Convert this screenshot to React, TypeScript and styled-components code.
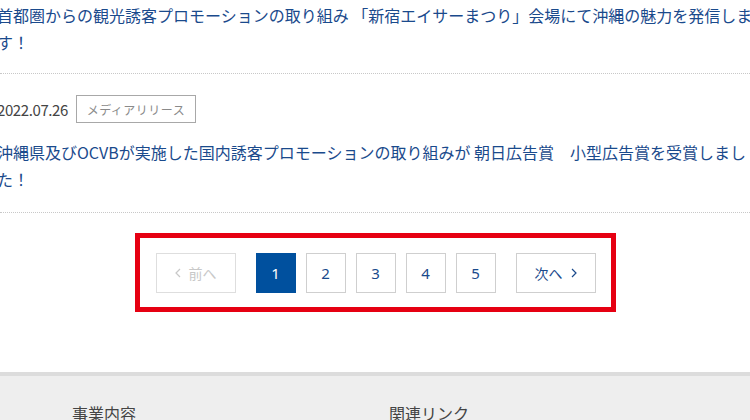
import React from "react";
import styled, { createGlobalStyle } from "styled-components";

const Global = createGlobalStyle`
  html, body { margin: 0; padding: 0; background: #fff; }
  body {
    width: 750px;
    height: 420px;
    overflow: hidden;
    font-family: "Noto Sans", "Noto Sans CJK JP", sans-serif;
    color: #333;
  }
`;

const Page = styled.div`
  display: flex;
  flex-direction: column;
  width: 750px;
`;

const NewsList = styled.ul`
  list-style: none;
  margin: 0;
  padding: 0;
`;

const NewsItem = styled.li<{ $first?: boolean }>`
  display: flex;
  flex-direction: column;
  padding: ${(p) => (p.$first ? "2px 0 17px" : "21px 0 19px")};
  border-bottom: 1px dotted #c8c8c8;
`;

const Inner = styled.div`
  margin-left: -3px;
  width: 768px;
  display: flex;
  flex-direction: column;
  gap: 16px;
`;

const Meta = styled.div`
  display: flex;
  align-items: center;
  gap: 8px;
  height: 28px;
`;

const DateText = styled.span`
  font-family: "Noto Sans CJK JP", sans-serif;
  font-size: 15px;
  color: #444;
  letter-spacing: -0.4px;
`;

const Tag = styled.span`
  box-sizing: border-box;
  display: inline-flex;
  align-items: center;
  justify-content: center;
  width: 120px;
  height: 28px;
  border: 1px solid #a8a8a8;
  font-family: "Noto Sans CJK JP", sans-serif;
  font-size: 12px;
  color: #8a8a8a;
  letter-spacing: 0.5px;
`;

const Title = styled.a`
  display: block;
  font-family: "Noto Sans CJK JP", sans-serif;
  font-size: 16px;
  line-height: 27px;
  color: #1a4a8c;
  text-decoration: none;
`;

const PagerWrap = styled.div`
  display: flex;
  justify-content: center;
  padding: 20px 0 60px;
  border-bottom: 4px solid #dcdcdc;
`;

const Pager = styled.nav`
  display: flex;
  align-items: center;
  padding: 15px 15px 14px 16px;
  border: 5px solid #e60012;
`;

const Pages = styled.div`
  display: flex;
  gap: 10px;
  margin: 0 20px;
`;

const PageBtn = styled.a<{ $active?: boolean }>`
  box-sizing: border-box;
  display: flex;
  align-items: center;
  justify-content: center;
  width: 40px;
  height: 40px;
  border: 1px solid ${(p) => (p.$active ? "#00509e" : "#cfcfcf")};
  background: ${(p) => (p.$active ? "#00509e" : "#fff")};
  color: ${(p) => (p.$active ? "#fff" : "#1a4a8c")};
  font-family: "Noto Sans", sans-serif;
  font-size: 15px;
  text-decoration: none;
`;

const NavBtn = styled.a<{ $disabled?: boolean }>`
  box-sizing: border-box;
  display: flex;
  align-items: center;
  justify-content: center;
  gap: 8px;
  width: 80px;
  height: 40px;
  border: 1px solid ${(p) => (p.$disabled ? "#dedede" : "#cfcfcf")};
  color: ${(p) => (p.$disabled ? "#c8c8c8" : "#1a4a8c")};
  font-family: "Noto Sans CJK JP", sans-serif;
  font-size: 14px;
  text-decoration: none;
`;

const Footer = styled.footer`
  background: #eeeeee;
  height: 60px;
  display: grid;
  grid-template-columns: 317px 1fr;
  padding: 25px 0 0 72px;
`;

const FooterHead = styled.div`
  font-family: "Noto Sans CJK JP", sans-serif;
  font-size: 16px;
  color: #444;
`;

const Chevron = ({ dir }: { dir: "left" | "right" }) => (
  <svg width="6" height="10" viewBox="0 0 6 10" fill="none">
    <path
      d={dir === "left" ? "M5 1 L1 5 L5 9" : "M1 1 L5 5 L1 9"}
      stroke="currentColor"
      strokeWidth="1.2"
    />
  </svg>
);

export default function App() {
  return (
    <>
      <Global />
      <Page>
        <NewsList>
          <NewsItem $first>
            <Inner>
              <Title href="#">
                首都圏からの観光誘客プロモーションの取り組み 「新宿エイサーまつり」会場にて沖縄の魅力を発信します！
              </Title>
            </Inner>
          </NewsItem>
          <NewsItem>
            <Inner>
              <Meta>
                <DateText>2022.07.26</DateText>
                <Tag>メディアリリース</Tag>
              </Meta>
              <Title href="#">
                沖縄県及びOCVBが実施した国内誘客プロモーションの取り組みが 朝日広告賞　小型広告賞を受賞しました！
              </Title>
            </Inner>
          </NewsItem>
        </NewsList>
        <PagerWrap>
          <Pager>
            <NavBtn $disabled>
              <Chevron dir="left" />
              前へ
            </NavBtn>
            <Pages>
              {[1, 2, 3, 4, 5].map((n) => (
                <PageBtn key={n} $active={n === 1} href="#">
                  {n}
                </PageBtn>
              ))}
            </Pages>
            <NavBtn href="#">
              次へ
              <Chevron dir="right" />
            </NavBtn>
          </Pager>
        </PagerWrap>
        <Footer>
          <FooterHead>事業内容</FooterHead>
          <FooterHead>関連リンク</FooterHead>
        </Footer>
      </Page>
    </>
  );
}
